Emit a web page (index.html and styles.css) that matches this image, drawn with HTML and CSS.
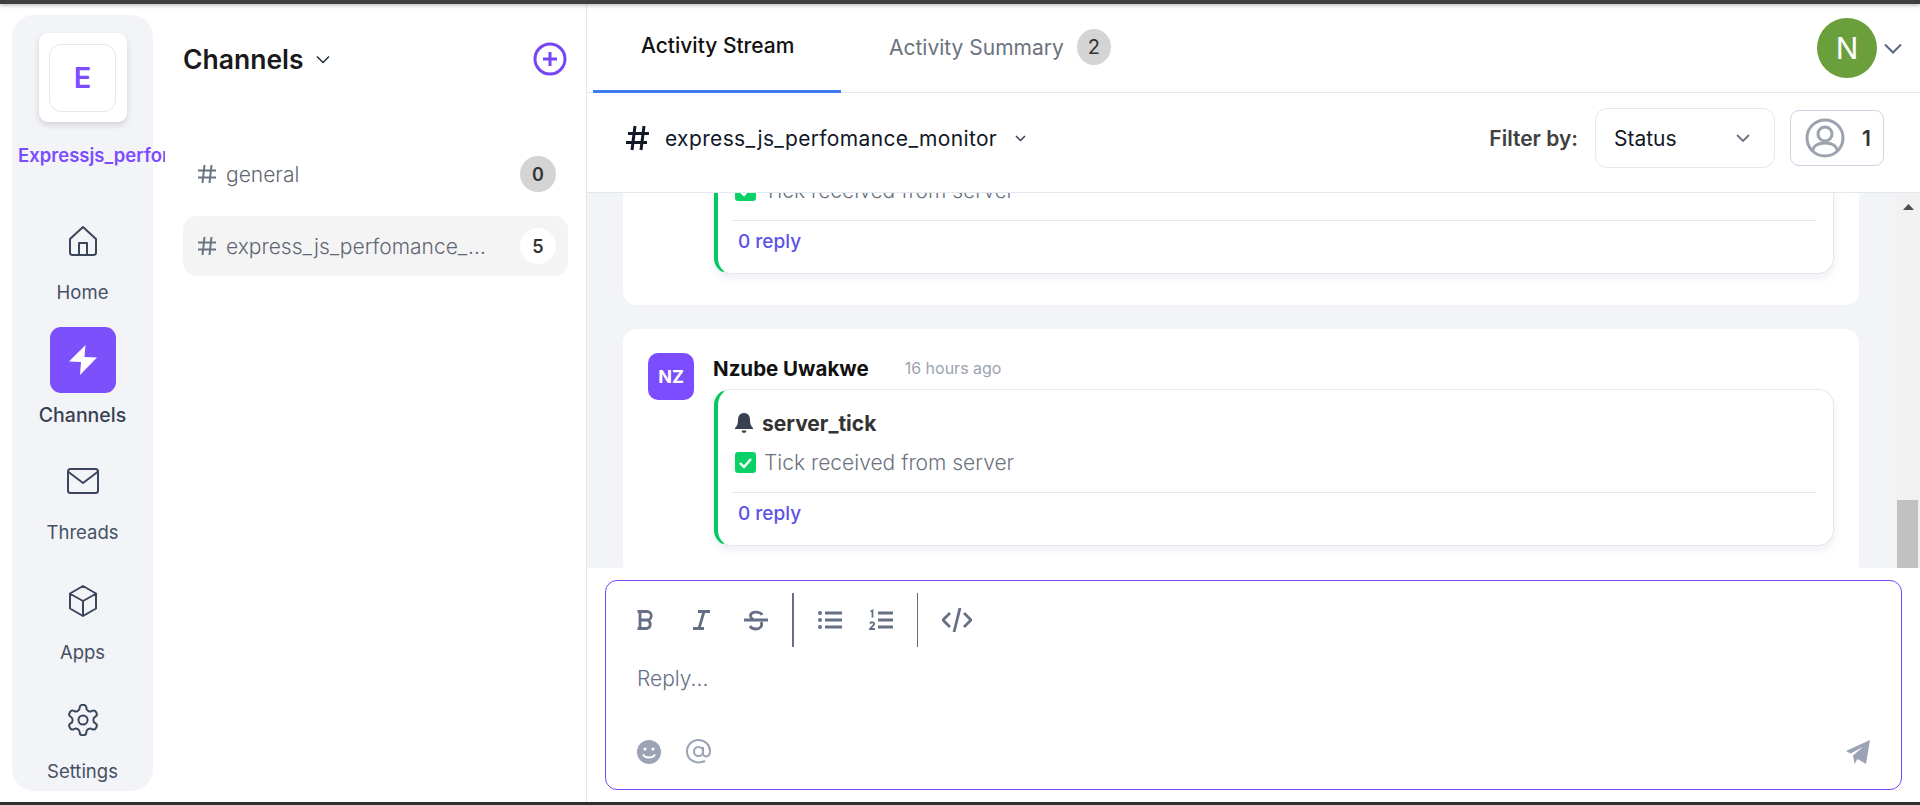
FILE: index.html
```html
<!DOCTYPE html>
<html lang="en">
<head>
    <meta charset="UTF-8">
    <meta name="viewport" content="width=device-width, initial-scale=1.0">
    <title>Activity Stream</title>
    <link rel="stylesheet" href="styles.css">
</head>
<body>
    <div class="topline"></div>
    <div class="app">
        <nav class="rail">
            <div class="org-card"><div class="org-tile">E</div></div>
            <div class="org-name">Expressjs_perfomance_monitor</div>
            <a class="rail-item rail-home" href="#">
                <svg width="28" height="30" viewBox="0 0 28 30" class="rail-icon"><path d="M1 13 14 1l13 12v13.500a2.500 2.500 0 0 1-2.500 2.500h-21A2.500 2.500 0 0 1 1 26.500zM10 29V17h8v12"/></svg>
                <span>Home</span>
            </a>
            <a class="rail-item rail-active" href="#">
                <span class="bolt-tile">
                    <svg width="28" height="30" viewBox="0 0 28 30"><path d="M16.500 0 0 16.500l12 .5-1 13 17-17.500-12.500-.5z" fill="#fff"/></svg>
                </span>
                <span>Channels</span>
            </a>
            <a class="rail-item rail-threads" href="#">
                <svg width="32" height="26" viewBox="0 0 32 26" class="rail-icon"><rect x="1" y="1" width="30" height="24" rx="2.500"/><path d="M1.500 4 16 15 30.500 4"/></svg>
                <span>Threads</span>
            </a>
            <a class="rail-item rail-apps" href="#">
                <svg width="28" height="32" viewBox="0 0 28 32" class="rail-icon"><path d="m14 1 13 7.500v15L14 31 1 23.500v-15zM1.500 9 14 16l12.500-7M14 16v15"/></svg>
                <span>Apps</span>
            </a>
            <a class="rail-item rail-settings" href="#">
                <svg width="32" height="32" viewBox="1.500 1.500 21 21" class="rail-icon gear"><path d="M12.220 2h-.44a2 2 0 0 0-2 2v.18a2 2 0 0 1-1 1.730l-.43.25a2 2 0 0 1-2 0l-.15-.08a2 2 0 0 0-2.730.73l-.22.38a2 2 0 0 0 .73 2.730l.15.1a2 2 0 0 1 1 1.720v.51a2 2 0 0 1-1 1.740l-.15.09a2 2 0 0 0-.73 2.730l.22.38a2 2 0 0 0 2.730.73l.15-.08a2 2 0 0 1 2 0l.43.25a2 2 0 0 1 1 1.730V20a2 2 0 0 0 2 2h.44a2 2 0 0 0 2-2v-.18a2 2 0 0 1 1-1.730l.43-.25a2 2 0 0 1 2 0l.15.08a2 2 0 0 0 2.730-.73l.22-.39a2 2 0 0 0-.73-2.730l-.15-.08a2 2 0 0 1-1-1.740v-.5a2 2 0 0 1 1-1.740l.15-.09a2 2 0 0 0 .73-2.730l-.22-.38a2 2 0 0 0-2.730-.73l-.15.08a2 2 0 0 1-2 0l-.43-.25a2 2 0 0 1-1-1.730V4a2 2 0 0 0-2-2z"/><circle cx="12" cy="12" r="3"/></svg>
                <span>Settings</span>
            </a>
        </nav>

        <aside class="channels">
            <div class="channels-head">
                <h2>Channels</h2>
                <svg width="14" height="9" viewBox="0 0 14 9" class="chev"><path d="m1 1.500 6 6 6-6"/></svg>
                <svg width="34" height="34" viewBox="0 0 34 34" class="add-btn"><circle cx="17" cy="17" r="15"/><path d="M17 10v14M10 17h14"/></svg>
            </div>
            <div class="channel-row">
                <svg width="18" height="18" viewBox="0 0 18 18" class="hash"><path d="M6.500 0 4.500 18M13.500 0l-2 18M0 5.500h18M0 12.500h18"/></svg>
                <span class="channel-name">general</span>
                <span class="count">0</span>
            </div>
            <div class="channel-row channel-active">
                <svg width="18" height="18" viewBox="0 0 18 18" class="hash"><path d="M6.500 0 4.500 18M13.500 0l-2 18M0 5.500h18M0 12.500h18"/></svg>
                <span class="channel-name">express_js_perfomance_monitor</span>
                <span class="count count-white">5</span>
            </div>
        </aside>

        <main class="main">
            <div class="tabs">
                <a class="tab tab-active" href="#">Activity Stream</a>
                <a class="tab" href="#">Activity Summary <span class="tab-count">2</span></a>
                <div class="user">
                    <div class="user-avatar">N</div>
                    <svg width="18" height="11" viewBox="0 0 18 11" class="user-chev"><path d="m1 1.500 8 8 8-8"/></svg>
                </div>
            </div>

            <div class="subhead">
                <svg width="23" height="26" viewBox="0 0 23 26" class="hash-big"><path d="M9 1 6 25M18 1l-3 24M2 8.500h21M0 17.500h21"/></svg>
                <span class="subhead-name">express_js_perfomance_monitor</span>
                <svg width="11" height="7" viewBox="0 0 11 7" class="chev-small"><path d="m1 1 4.500 4.500L10 1"/></svg>
                <span class="filter-label">Filter by:</span>
                <div class="status-select">
                    <span>Status</span>
                    <svg width="14" height="9" viewBox="0 0 14 9" class="select-chev"><path d="m1 1 6 6 6-6"/></svg>
                </div>
                <div class="members">
                    <svg width="40" height="40" viewBox="0 0 40 40" class="members-icon"><circle cx="20" cy="20" r="18"/><circle cx="20" cy="16" r="7"/><path d="M7.500 32.500C9 26.500 14 25 20 25s11 1.500 12.500 7.500"/></svg>
                    <span>1</span>
                </div>
            </div>

            <div class="stream">
                <div class="stream-list">
                    <article class="message">
                        <div class="msg-avatar">NZ</div>
                        <div class="msg-body">
                            <div class="msg-meta"><strong>Nzube Uwakwe</strong><time>16 hours ago</time></div>
                            <div class="event">
                                <div class="event-title">
                                    <svg width="18" height="20" viewBox="0 0 18 20"><path d="M9 0C5 0 3 3 3 7c0 4-1 6-3 8v1h18v-1c-2-2-3-4-3-8 0-4-2-7-6-7zM6.500 17.500a2.500 2.500 0 0 0 5 0z" fill="#374151"/></svg>
                                    <span>server_tick</span>
                                </div>
                                <div class="event-text">
                                    <svg width="21" height="21" viewBox="0 0 21 21"><rect width="21" height="21" rx="3" fill="#0ad167"/><path d="m5 11 4 4 7-8" fill="none" stroke="#fff" stroke-width="2.400"/></svg>
                                    <span>Tick received from server</span>
                                </div>
                                <div class="event-reply"><a href="#">0 reply</a></div>
                            </div>
                        </div>
                    </article>
                    <article class="message">
                        <div class="msg-avatar">NZ</div>
                        <div class="msg-body">
                            <div class="msg-meta"><strong>Nzube Uwakwe</strong><time>16 hours ago</time></div>
                            <div class="event">
                                <div class="event-title">
                                    <svg width="18" height="20" viewBox="0 0 18 20"><path d="M9 0C5 0 3 3 3 7c0 4-1 6-3 8v1h18v-1c-2-2-3-4-3-8 0-4-2-7-6-7zM6.500 17.500a2.500 2.500 0 0 0 5 0z" fill="#374151"/></svg>
                                    <span>server_tick</span>
                                </div>
                                <div class="event-text">
                                    <svg width="21" height="21" viewBox="0 0 21 21"><rect width="21" height="21" rx="3" fill="#0ad167"/><path d="m5 11 4 4 7-8" fill="none" stroke="#fff" stroke-width="2.400"/></svg>
                                    <span>Tick received from server</span>
                                </div>
                                <div class="event-reply"><a href="#">0 reply</a></div>
                            </div>
                        </div>
                    </article>
                </div>
                <div class="scrollbar">
                    <svg width="11" height="6" viewBox="0 0 11 6"><path d="M5.500 0 11 6H0z" fill="#505050"/></svg>
                    <div class="scroll-thumb"></div>
                </div>
            </div>

            <div class="composer">
                <div class="toolbar">
                    <div class="tool-group tool-group-text">
                        <svg width="24" height="24" viewBox="0 0 24 24" class="tool"><path d="M3.500 3.500h9.500a4 4 0 0 1 0 8.500H6m7 0a4.400 4.400 0 0 1 0 8.500H3.500M6 3.500v17"/></svg>
                        <svg width="24" height="24" viewBox="0 0 24 24" class="tool"><path d="M9 3.500h12M4 20.500h11M15 3.500 10 20.500"/></svg>
                        <svg width="24" height="24" viewBox="0 0 24 24" class="tool"><path d="M18 7c-1-3-10-4.500-11.500 0-.4 2 1 3.500 2.500 4.500M0 12h24M17 14c2 4-1 7-5 7-3 0-5-1-6-3"/></svg>
                    </div>
                    <div class="tool-sep"></div>
                    <div class="tool-group tool-group-list">
                        <svg width="24" height="24" viewBox="0 0 24 24" class="tool"><path d="M7 5h17M7 12h17M7 19h17"/><circle cx="2" cy="5" r="2" class="dot"/><circle cx="2" cy="12" r="2" class="dot"/><circle cx="2" cy="19" r="2" class="dot"/></svg>
                        <svg width="24" height="24" viewBox="0 0 24 24" class="tool"><path d="M9 5h15M9 12h15M9 19h15"/><path d="M1.500 3.500 3.500 2.500v7M1 15.500c1-2 5-1.500 4 1L1 21h5" class="digit"/></svg>
                    </div>
                    <div class="tool-sep"></div>
                    <svg width="30" height="24" viewBox="0 0 30 24" class="tool"><path d="M8 5 1 12l7 7M22 5l7 7-7 7M18 0l-6 24"/></svg>
                </div>
                <div class="reply-input">Reply...</div>
                <div class="composer-foot">
                    <svg width="24" height="24" viewBox="0 0 24 24"><circle cx="12" cy="12" r="12" fill="#9ca3b4"/><circle cx="8" cy="9" r="1.500" fill="#fff"/><circle cx="16" cy="9" r="1.500" fill="#fff"/><path d="M6 14.500c2 4 10 4 12 0" fill="none" stroke="#fff" stroke-width="1.800"/></svg>
                    <svg width="25" height="25" viewBox="0 0 25 25" class="at"><path d="M19 22c-9 4-18-1-18-9.500C1 6 6 1 12.500 1S24 6 24 12c0 7-7 7-7 2V8m0 4.500a4.500 4.500 0 1 1-9 0 4.500 4.500 0 0 1 9 0z"/></svg>
                    <svg width="24" height="24" viewBox="0 0 24 24" class="send"><path d="M24 0 20 24l-8.500-5-3 5-1.500-8.500L17 7 4.500 13.500 0 11z" fill="#9ca3b4"/></svg>
                </div>
            </div>
        </main>
    </div>
    <div class="bottomline"></div>
</body>
</html>
```

FILE: styles.css
```css
* {
    box-sizing: border-box;
}
body {
    margin: 0;
    height: 100vh;
    display: flex;
    flex-direction: column;
    overflow: hidden;
    background-color: #fff;
    font-family: Inter, "Liberation Sans", sans-serif;
    color: #1f2937;
}
a {
    color: inherit;
    text-decoration: none;
}
svg {
    flex: none;
    display: block;
}
.topline {
    height: 4px;
    background-color: #3f3f3f;
    box-shadow: 0 1px 4px rgba(0, 0, 0, 0.35);
    position: relative;
    z-index: 1;
}
.bottomline {
    height: 3px;
    background-color: #2e2e2e;
}
.app {
    flex: 1;
    display: flex;
    min-height: 0;
}

/* left rail */
.rail {
    flex: none;
    width: 141px;
    margin: 11px 0 11px 12px;
    background-color: #f3f4f8;
    border-radius: 22px;
    display: flex;
    flex-direction: column;
    align-items: center;
    padding-top: 18px;
}
.org-card {
    width: 88px;
    height: 89px;
    background-color: #fff;
    border-radius: 9px;
    box-shadow: 0 3px 6px rgba(0, 0, 0, 0.14);
    display: flex;
    align-items: center;
    justify-content: center;
}
.org-tile {
    width: 67px;
    height: 68px;
    border: 1px solid #e5e7eb;
    border-radius: 12px;
    display: flex;
    align-items: center;
    justify-content: center;
    font-size: 29px;
    font-weight: 600;
    color: #7c4dff;
}
.org-name {
    width: 147px;
    margin: 22px 0 0 6px;
    align-self: flex-start;
    overflow: hidden;
    white-space: nowrap;
    font-size: 18.500px;
    line-height: 22px;
    font-weight: 600;
    color: #7c4dff;
}
.rail-item {
    display: flex;
    flex-direction: column;
    align-items: center;
    font-size: 18.500px;
    line-height: 20px;
    color: #465063;
}
.rail-icon {
    fill: none;
    stroke: #3b465c;
    stroke-width: 2;
    stroke-linejoin: round;
    stroke-linecap: round;
}
.rail-icon.gear {
    stroke-width: 1.300;
}
.rail-home {
    margin-top: 60px;
}
.rail-home span {
    margin-top: 26px;
}
.rail-active {
    margin-top: 25px;
    font-size: 19.500px;
    font-weight: 500;
    color: #374151;
}
.rail-active span:last-child {
    margin-top: 12px;
}
.bolt-tile {
    width: 66px;
    height: 66px;
    background-color: #7c50fb;
    border-radius: 11px;
    display: flex;
    align-items: center;
    justify-content: center;
}
.rail-threads {
    margin-top: 43px;
}
.rail-threads span {
    margin-top: 28px;
}
.rail-apps {
    margin-top: 43px;
}
.rail-apps span {
    margin-top: 25px;
}
.rail-settings {
    margin-top: 42px;
}
.rail-settings span {
    margin-top: 25px;
}

/* channels column */
.channels {
    flex: none;
    width: 433px;
    padding: 0 18px 0 30px;
}
.channels-head {
    display: flex;
    align-items: center;
    height: 34px;
    margin-top: 38px;
}
.channels-head h2 {
    margin: 0;
    font-size: 26.500px;
    font-weight: 600;
    color: #1a1a1a;
}
.chev {
    margin-left: 12px;
    fill: none;
    stroke: #1f2937;
    stroke-width: 1.500;
}
.add-btn {
    margin-left: auto;
    margin-right: 1px;
    fill: none;
    stroke: #7645f5;
    stroke-width: 3;
}
.channel-row {
    display: flex;
    align-items: center;
    height: 60px;
    padding: 0 12px 0 15px;
    font-size: 21px;
    font-weight: 300;
    color: #5f6672;
    border-radius: 14px;
}
.channels-head + .channel-row {
    margin-top: 80px;
    height: 36px;
}
.channel-row + .channel-row {
    margin-top: 24px;
}
.channel-active {
    background-color: #f4f4f5;
}
.hash {
    fill: none;
    stroke: #6b7280;
    stroke-width: 2;
}
.channel-name {
    flex: 1;
    min-width: 0;
    margin: 0 25px 0 10px;
    white-space: nowrap;
    overflow: hidden;
    text-overflow: ellipsis;
}
.count {
    flex: none;
    width: 36px;
    height: 36px;
    border-radius: 50%;
    background-color: #d4d4d4;
    display: flex;
    align-items: center;
    justify-content: center;
    font-size: 18px;
    font-weight: 600;
    color: #333;
}
.count-white {
    background-color: #fff;
}

/* main column */
.main {
    flex: 1;
    min-width: 0;
    display: flex;
    flex-direction: column;
    border-left: 1px solid #e5e7eb;
}
.tabs {
    height: 89px;
    flex: none;
    display: flex;
    align-items: stretch;
    padding-left: 6px;
    border-bottom: 1px solid #e2e8f0;
}
.tab {
    display: flex;
    align-items: center;
    gap: 13px;
    height: 89px;
    padding: 0 0 3px 48px;
    font-size: 21px;
    white-space: nowrap;
    color: #6b7280;
}
.tab-active {
    width: 248px;
    color: #111;
    font-weight: 500;
    border-bottom: 3px solid #3b7cf0;
}
.tab-count {
    width: 34px;
    height: 36px;
    border-radius: 50%;
    background-color: #d4d4d4;
    color: #333;
    display: flex;
    align-items: center;
    justify-content: center;
    font-size: 20px;
}
.user {
    margin-left: auto;
    display: flex;
    align-items: center;
    gap: 7px;
    padding-right: 18px;
}
.user-avatar {
    width: 60px;
    height: 60px;
    border-radius: 50%;
    background-color: #6a9f3b;
    color: #fff;
    font-size: 30px;
    display: flex;
    align-items: center;
    justify-content: center;
}
.user-chev {
    fill: none;
    stroke: #5b6780;
    stroke-width: 2;
}
.subhead {
    height: 100px;
    flex: none;
    display: flex;
    align-items: center;
    padding: 0 36px 9px 39px;
    border-bottom: 1px solid #e2e8f0;
    font-size: 21px;
    color: #111827;
}
.hash-big {
    fill: none;
    stroke: #111827;
    stroke-width: 3;
}
.subhead-name {
    margin-left: 16px;
    letter-spacing: 0.350px;
}
.chev-small {
    margin-left: 18px;
    fill: none;
    stroke: #374151;
    stroke-width: 1.500;
}
.filter-label {
    margin-left: auto;
    font-weight: 600;
    color: #404040;
}
.status-select {
    width: 180px;
    height: 60px;
    margin-left: 17px;
    padding: 0 24px 0 18px;
    border: 1px solid #e2e8f0;
    border-radius: 12px;
    display: flex;
    align-items: center;
    justify-content: space-between;
}
.select-chev {
    fill: none;
    stroke: #6b7280;
    stroke-width: 1.800;
}
.members {
    width: 94px;
    height: 56px;
    margin-left: 15px;
    padding: 0 12px 0 14px;
    border: 1px solid #cbd5e1;
    border-radius: 9px;
    display: flex;
    align-items: center;
    justify-content: space-between;
    font-weight: 600;
    color: #333;
}
.members-icon {
    fill: none;
    stroke: #9ca3af;
    stroke-width: 3;
}

/* stream */
.stream {
    flex: 1;
    min-height: 0;
    display: flex;
    overflow: hidden;
    background-color: #f3f4f8;
}
.stream-list {
    flex: 1;
    min-width: 0;
    padding: 0 36px;
}
.message {
    display: flex;
    gap: 20px;
    padding: 24px 25px 31px;
    background-color: #fff;
    border-radius: 14px;
}
.message:first-child {
    margin-top: -136px;
}
.message + .message {
    margin-top: 24px;
}
.msg-avatar {
    width: 46px;
    height: 47px;
    flex: none;
    border-radius: 10px;
    background-color: #7c4dff;
    color: #fff;
    font-size: 18px;
    font-weight: 700;
    display: flex;
    align-items: center;
    justify-content: center;
}
.msg-body {
    flex: 1;
    min-width: 0;
}
.msg-meta {
    height: 30px;
    margin: 0 0 6px -1px;
    display: flex;
    align-items: center;
    gap: 36px;
}
.msg-meta strong {
    font-size: 20.500px;
    font-weight: 700;
    color: #111;
}
.msg-meta time {
    font-size: 16px;
    color: #9ca3af;
}
.event {
    height: 157px;
    padding: 19px 17px 0 14px;
    background-color: #fff;
    border: 1px solid #e5e7eb;
    border-left: 4px solid #05c760;
    border-radius: 16px;
    box-shadow: 0 4px 8px rgba(100, 116, 139, 0.12);
}
.event-title {
    display: flex;
    align-items: center;
    gap: 9px;
    height: 28px;
    padding-left: 3px;
    font-size: 21px;
    font-weight: 700;
    color: #333;
}
.event-text {
    display: flex;
    align-items: center;
    gap: 8px;
    height: 28px;
    margin-top: 11px;
    padding-left: 3px;
    font-size: 21px;
    font-weight: 300;
    color: #6b7280;
}
.event-reply {
    margin-top: 16px;
    padding: 8px 0 0 6px;
    border-top: 1px solid #e5e7eb;
    font-size: 19px;
    line-height: 26px;
    font-weight: 500;
    color: #5b52e8;
}
.scrollbar {
    width: 25px;
    flex: none;
    background-color: #f1f1f1;
    display: flex;
    flex-direction: column;
    align-items: center;
    padding-top: 11px;
}
.scrollbar svg {
    margin-left: 2px;
}
.scroll-thumb {
    width: 21px;
    height: 68px;
    margin-top: auto;
    background-color: #c1c1c1;
}

/* composer */
.composer {
    height: 210px;
    flex: none;
    margin: 12px 18px;
    border: 1.500px solid #7645f5;
    border-radius: 12px;
    padding: 12px 31px 25px 28px;
    display: flex;
    flex-direction: column;
}
.toolbar {
    display: flex;
    align-items: center;
    gap: 24px;
    height: 54px;
}
.tool-group {
    display: flex;
    align-items: center;
}
.tool-group-text {
    gap: 31px;
}
.tool-group-list {
    gap: 27px;
}
.tool {
    fill: none;
    stroke: #667085;
    stroke-width: 2.800;
}
.tool .dot {
    fill: #667085;
    stroke: none;
}
.tool .digit {
    stroke-width: 1.800;
}
.tool-sep {
    width: 1.500px;
    height: 54px;
    background-color: #667085;
}
.reply-input {
    margin: 18px 0 0 3px;
    font-size: 21px;
    line-height: 28px;
    font-weight: 300;
    color: #667085;
}
.composer-foot {
    margin-top: auto;
    display: flex;
    align-items: center;
    gap: 25px;
    padding-left: 3px;
}
.at {
    fill: none;
    stroke: #9ca3b4;
    stroke-width: 2;
}
.send {
    margin-left: auto;
}
```
